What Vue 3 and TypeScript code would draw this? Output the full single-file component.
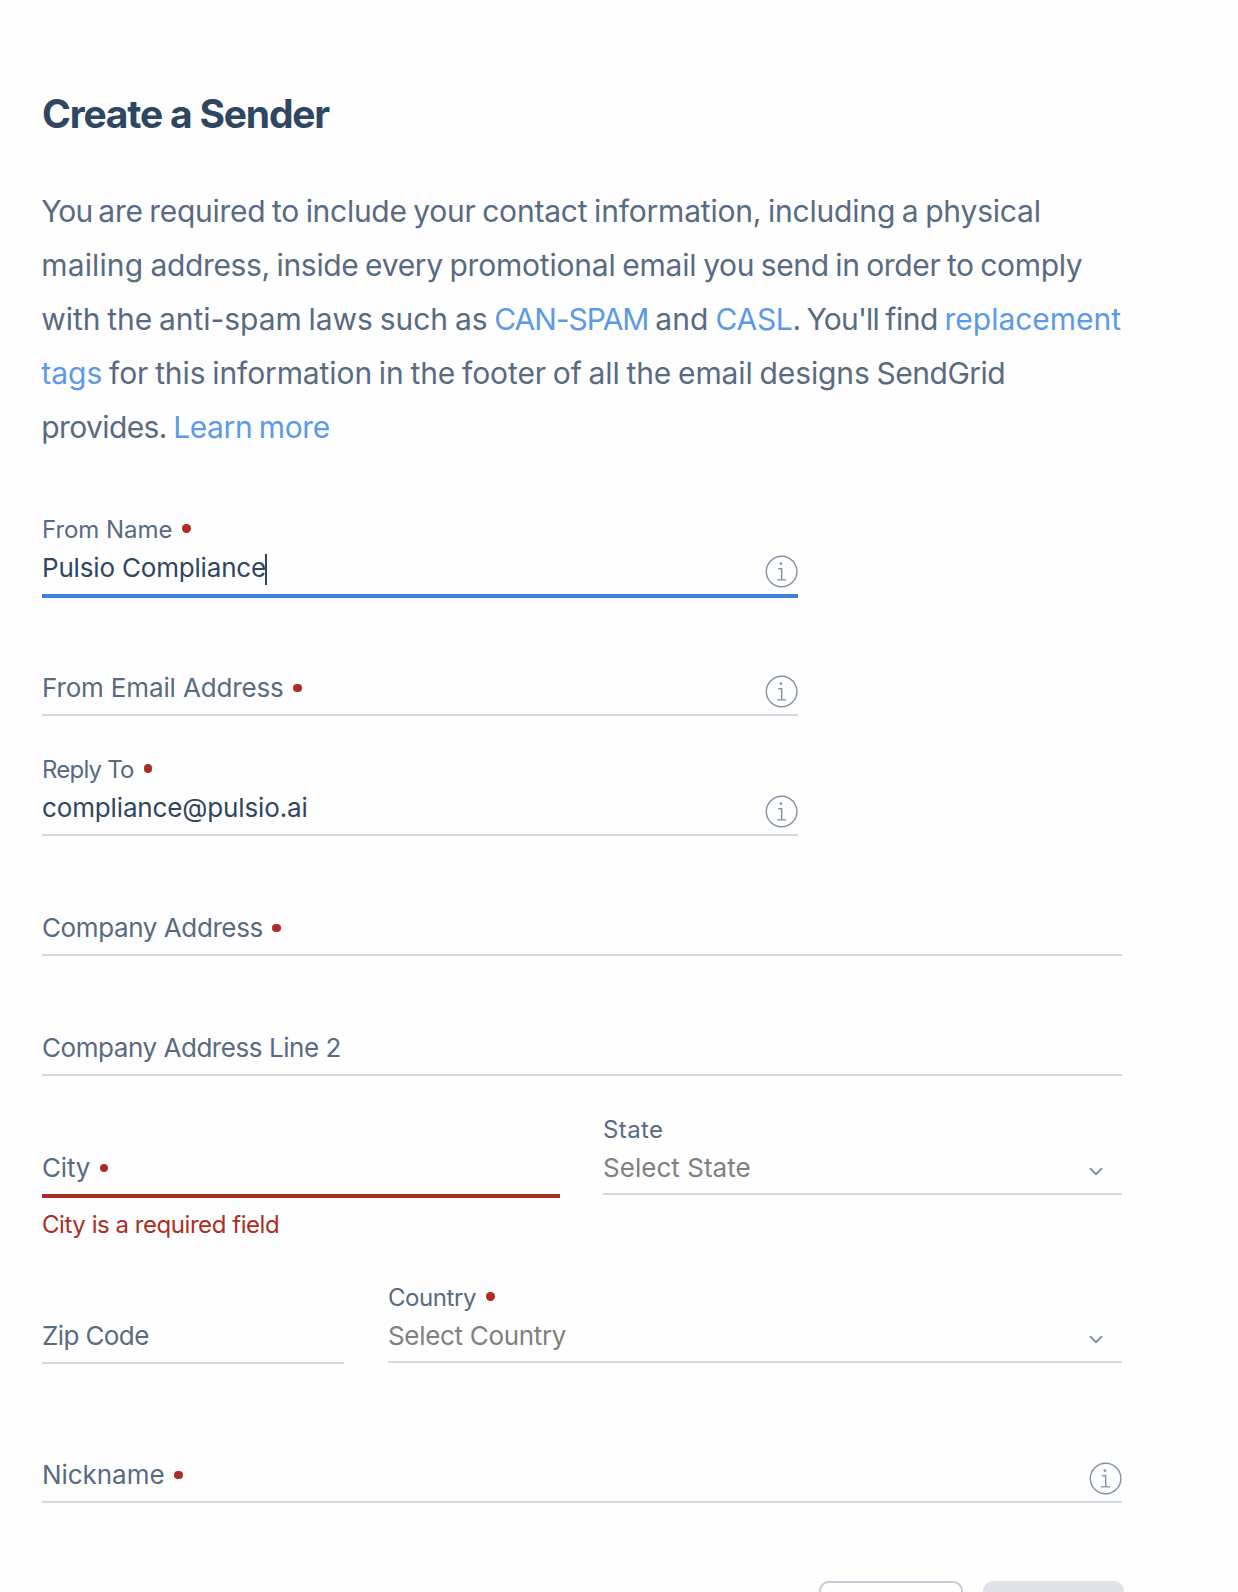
<script setup lang="ts">
interface Segment {
  text: string
  spacing: number
  link?: boolean
}

const intro: Segment[][] = [
  [
    { text: 'You ', spacing: -0.9 },
    { text: 'are required to include your ', spacing: -0.28 },
    { text: 'contact information, including a physical', spacing: -0.2 },
  ],
  [
    { text: 'mailing ', spacing: 0.15 },
    { text: 'address, inside every ', spacing: -0.33 },
    { text: 'promotional email ', spacing: -0.2 },
    { text: 'you send in order to comply', spacing: -0.35 },
  ],
  [
    { text: 'with the anti-spam laws such as ', spacing: -0.05 },
    { text: 'CAN-SPAM', spacing: -1.05, link: true },
    { text: ' and ', spacing: 0.05 },
    { text: 'CASL', spacing: -0.29, link: true },
    { text: ". You'll ", spacing: -0.8 },
    { text: 'find ', spacing: -0.4 },
    { text: 'replacement', spacing: -0.03, link: true },
  ],
  [
    { text: 'tags', spacing: 0, link: true },
    { text: ' for this information in the footer of all the email designs ', spacing: -0.1 },
    { text: 'SendGrid', spacing: -0.5 },
  ],
  [
    { text: 'provides. ', spacing: -0.6 },
    { text: 'Learn more', spacing: -0.4, link: true },
  ],
]

interface Field {
  id: string
  label: string
  labelSpacing: number
  required?: boolean
  value?: string
  valueSpacing?: number
  focused?: boolean
  error?: string
  info?: boolean
  select?: boolean
}

const rows: { layout: string; fields: Field[] }[] = [
  { layout: 'narrow', fields: [{ id: 'from', label: 'From Name', labelSpacing: -0.04, required: true, value: 'Pulsio Compliance', valueSpacing: -0.18, focused: true, info: true }] },
  { layout: 'narrow', fields: [{ id: 'email', label: 'From Email Address', labelSpacing: -0.15, required: true, info: true }] },
  { layout: 'narrow', fields: [{ id: 'reply', label: 'Reply To', labelSpacing: -0.8, required: true, value: 'compliance@pulsio.ai', valueSpacing: -0.14, info: true }] },
  { layout: 'full', fields: [{ id: 'addr', label: 'Company Address', labelSpacing: -0.4, required: true }] },
  { layout: 'full', fields: [{ id: 'addr2', label: 'Company Address Line 2', labelSpacing: -0.45 }] },
  {
    layout: 'place',
    fields: [
      { id: 'city', label: 'City', labelSpacing: -0.2, required: true, error: 'City is a required field' },
      { id: 'state', label: 'State', labelSpacing: 0.38, value: 'Select State', valueSpacing: 0.03, select: true },
    ],
  },
  {
    layout: 'region',
    fields: [
      { id: 'zip', label: 'Zip Code', labelSpacing: -0.6 },
      { id: 'country', label: 'Country', labelSpacing: -0.42, required: true, value: 'Select Country', valueSpacing: -0.32, select: true },
    ],
  },
  { layout: 'full', fields: [{ id: 'nick', label: 'Nickname', labelSpacing: -0.05, required: true, info: true }] },
]

const tracking = (n = 0) => ({ letterSpacing: `${n}px` })
</script>

<template>
  <main class="page">
    <h1>Create a Sender</h1>
    <p class="intro">
      <span v-for="(line, i) in intro" :key="i" class="line"><span
        v-for="(seg, j) in line"
        :key="j"
        :class="{ link: seg.link }"
        :style="tracking(seg.spacing)"
      >{{ seg.text }}</span></span>
    </p>

    <form>
      <div v-for="(row, i) in rows" :key="i" class="row" :class="row.layout">
        <div
          v-for="f in row.fields"
          :key="f.id"
          class="field"
          :class="{ focused: f.focused, invalid: f.error, select: f.select }"
        >
          <div class="label">
            <template v-if="f.value">
              <span :style="tracking(f.labelSpacing)">{{ f.label }}</span>
              <i v-if="f.required" class="dot" />
            </template>
          </div>
          <div class="control">
            <span v-if="f.value" class="value" :style="tracking(f.valueSpacing)">{{ f.value }}</span>
            <span v-else class="placeholder">
              <span :style="tracking(f.labelSpacing)">{{ f.label }}</span>
              <i v-if="f.required" class="dot" />
            </span>
            <i v-if="f.focused" class="caret" />
            <svg v-if="f.info" class="info" viewBox="0 0 34 34" fill="none" stroke="#8391a5">
              <circle cx="16.6" cy="16.5" r="15.3" stroke-width="1.4" />
              <path d="M13.2 13.8h3.5v11.1M12 24.9h9.2" stroke-width="1.4" />
              <circle cx="15.9" cy="8.6" r="1.4" fill="#8391a5" stroke="none" />
            </svg>
            <svg v-if="f.select" class="chevron" viewBox="0 0 14 9" fill="none">
              <path d="M1 1.2l6 5.9 6-5.9" stroke="#8090a4" stroke-width="1.9" />
            </svg>
          </div>
          <div v-if="f.error" class="error">{{ f.error }}</div>
        </div>
      </div>
    </form>

    <div class="actions">
      <button class="cancel" type="button" />
      <button class="save" type="button" />
    </div>
  </main>
</template>

<style>
body {
  background: #fefefe;
  overflow: hidden;
}
</style>

<style scoped>
.page {
  box-sizing: border-box;
  width: 1238px;
  height: 1592px;
  padding: 90px 116px 0 42px;
  overflow: hidden;
  font-family: Inter, "Liberation Sans", sans-serif;
  color: #586b82;
}
h1 {
  margin: 0;
  font-size: 39px;
  line-height: 47px;
  font-weight: 700;
  letter-spacing: -1.2px;
  color: #2f4661;
}
.intro {
  margin: 47px 0 59px -0.8px;
  font-size: 30px;
  line-height: 54px;
  word-spacing: -1.5px;
}
.line {
  display: block;
  white-space: pre;
}
.link {
  color: #5d9ae6;
}
.row {
  display: flex;
  height: 120px;
}
.narrow {
  width: 756px;
}
.place {
  height: 168px;
  gap: 43px;
}
.place .field:first-child {
  flex: 0 0 518px;
}
.region {
  height: 139px;
  gap: 44px;
}
.region .field:first-child {
  flex: 0 0 302px;
}
.field {
  flex: 1;
}
.label {
  display: flex;
  align-items: center;
  height: 33px;
  margin-bottom: 3px;
  font-size: 24px;
  line-height: 33px;
}
.control {
  display: flex;
  height: 45px;
  border-bottom: 2px solid #d5dadf;
  font-size: 26px;
  line-height: 37px;
}
.select .control {
  height: 44px;
}
.focused .control {
  border-bottom: 4px solid #407fdb;
}
.invalid .control {
  border-bottom: 4px solid #ab2e26;
}
.value {
  color: #2f4661;
}
.select .value {
  color: #808080;
}
.placeholder {
  display: flex;
  align-items: center;
  height: 37px;
}
.dot {
  width: 8.4px;
  height: 8.4px;
  margin: 0 0 2px 10px;
  border-radius: 50%;
  background: #ab2e26;
}
.placeholder .dot {
  margin: 1px 0 0 9.6px;
}
.caret {
  width: 2px;
  height: 31px;
  margin: 5px 0 0 -1px;
  background: #2f4661;
}
.info {
  width: 34px;
  height: 34px;
  margin: 6px -1px 0 auto;
}
.chevron {
  width: 14px;
  height: 9px;
  margin: 18px 19px 0 auto;
}
.error {
  margin-top: 10px;
  font-size: 24px;
  line-height: 33px;
  letter-spacing: -0.45px;
  color: #ab2e26;
}
.actions {
  display: flex;
  justify-content: flex-end;
  gap: 20px;
  margin: 41px -2px 0 0;
}
button {
  box-sizing: border-box;
  width: 144px;
  height: 80px;
  padding: 0;
  border-radius: 10px;
}
.cancel {
  border: 2px solid #c8cad8;
  background: #fefefe;
}
.save {
  width: 141px;
  border: 0;
  background: #e1e2e8;
}
</style>
